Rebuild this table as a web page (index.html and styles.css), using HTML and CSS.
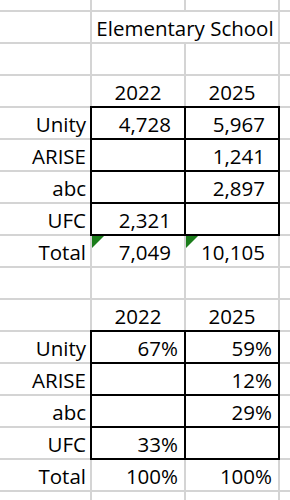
FILE: index.html
```html
<!DOCTYPE html>
<html>
<head>
<meta charset="utf-8">
<link rel="stylesheet" href="styles.css">
</head>
<body>
<div class="sheet">
  <div class="c"></div><div class="c"></div><div class="c"></div><div class="c"></div>

  <div class="c"></div><div class="c merged center">Elementary School</div><div class="c"></div>

  <div class="c"></div><div class="c"></div><div class="c"></div><div class="c"></div>

  <div class="c"></div><div class="c center">2022</div><div class="c center">2025</div><div class="c"></div>

  <div class="c lbl">Unity</div><div class="c b num">4,728</div><div class="c b num">5,967</div><div class="c"></div>
  <div class="c lbl">ARISE</div><div class="c b num"></div><div class="c b num">1,241</div><div class="c"></div>
  <div class="c lbl">abc</div><div class="c b num"></div><div class="c b num">2,897</div><div class="c"></div>
  <div class="c lbl">UFC</div><div class="c b num">2,321</div><div class="c b num"></div><div class="c"></div>
  <div class="c lbl">Total</div><div class="c num flag">7,049</div><div class="c num flag">10,105</div><div class="c"></div>

  <div class="c"></div><div class="c"></div><div class="c"></div><div class="c"></div>

  <div class="c"></div><div class="c center">2022</div><div class="c center">2025</div><div class="c"></div>

  <div class="c lbl">Unity</div><div class="c b pct">67%</div><div class="c b pct">59%</div><div class="c"></div>
  <div class="c lbl">ARISE</div><div class="c b pct"></div><div class="c b pct">12%</div><div class="c"></div>
  <div class="c lbl">abc</div><div class="c b pct"></div><div class="c b pct">29%</div><div class="c"></div>
  <div class="c lbl">UFC</div><div class="c b pct">33%</div><div class="c b pct"></div><div class="c"></div>
  <div class="c lbl">Total</div><div class="c pct">100%</div><div class="c pct">100%</div><div class="c"></div>

  <div class="c"></div><div class="c"></div><div class="c"></div><div class="c"></div>
</div>
</body>
</html>
```

FILE: styles.css
```css
html, body {
  margin: 0;
  padding: 0;
  background: #fff;
  overflow: hidden;
  height: 500px;
}
.sheet {
  display: grid;
  grid-template-columns: 90px 92px 92px 1fr;
  grid-template-rows: 10px repeat(16, 30px);
  gap: 2px;
  background: #d4d4d4;
  width: 290px;
  font-family: "Open Sans", Lato, sans-serif;
  font-size: 20.5px;
  font-weight: 500;
  line-height: 20px;
  color: #000;
}
.c {
  background: #fff;
  display: flex;
  align-items: flex-end;
  padding-bottom: 4px;
  box-sizing: border-box;
  white-space: nowrap;
  position: relative;
}
.merged {
  grid-column: 2 / 4;
}
.center {
  justify-content: center;
}
.lbl {
  justify-content: flex-end;
  padding-right: 4px;
}
.num {
  justify-content: flex-end;
  padding-right: 13px;
}
.pct {
  justify-content: flex-end;
  padding-right: 6px;
}
.b {
  outline: 2px solid #000;
}
.flag::before {
  content: "";
  position: absolute;
  left: 0;
  top: 0;
  width: 0;
  height: 0;
  border-top: 12px solid #1b7d1b;
  border-right: 12px solid transparent;
}
```
